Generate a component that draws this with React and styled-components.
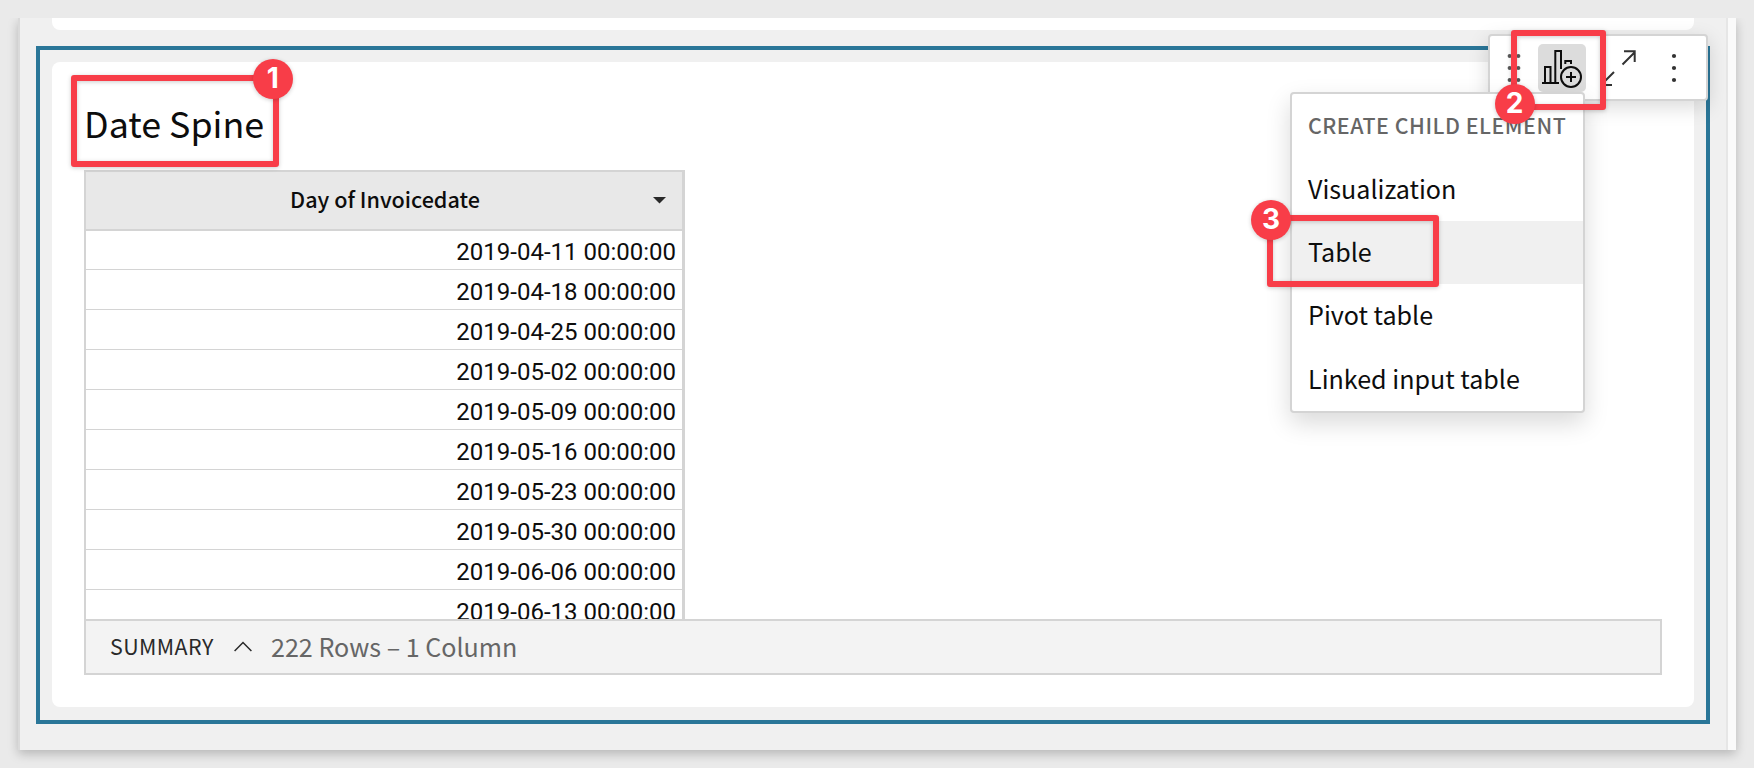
import React from "react";
import styled, { createGlobalStyle } from "styled-components";

const sans = `"Noto Sans CJK SC", "Noto Sans", sans-serif`;

const GlobalStyle = createGlobalStyle`
  * { box-sizing: border-box; }
  body { margin: 0; background: #eaeaea; overflow: hidden; font-family: ${sans}; color: #0d0d0d; }
`;

const Page = styled.div`
  position: relative;
  width: 1754px;
  height: 768px;
  padding: 18px 18px 18px;
  overflow: hidden;
`;

const Window = styled.div`
  display: flex;
  height: 732px;
  background: #f0f0f0;
  border-left: 2px solid #dadada;
  box-shadow: 0 4px 10px rgba(0, 0, 0, 0.22);
  clip-path: inset(0 -18px -18px -18px);
`;

const Canvas = styled.div`
  flex: 1;
  display: flex;
  flex-direction: column;
  padding: 0 16px;
`;

const ScrollTrack = styled.div`
  width: 10px;
  background: #fafafa;
  border-left: 2px solid #e6e6e6;
`;

const PreviousCard = styled.div`
  height: 12px;
  margin: 0 16px 16px;
  background: #fff;
  border-radius: 0 0 8px 8px;
`;

const SelectedFrame = styled.div`
  height: 678px;
  padding: 12px;
  border: 4px solid #2a7698;
`;

const Card = styled.section`
  height: 645px;
  padding: 0 32px;
  background: #fff;
  border-radius: 8px;
  display: flex;
  flex-direction: column;
`;

const Title = styled.h1`
  height: 108px;
  margin: 0;
  padding: 34px 0 0 0;
  font-size: 35.8px;
  line-height: 52px;
  font-weight: 400;
  white-space: nowrap;
`;

const TableViewport = styled.div`
  width: 601px;
  height: 449px;
  overflow: hidden;
  border: 2px solid #d4d4d4;
  border-right-width: 3px;
  border-bottom: 0;
`;

const HeaderCell = styled.div`
  display: flex;
  align-items: center;
  height: 59px;
  padding: 0 16px 0 31px;
  background: #e8e8e8;
  border-bottom: 2px solid #d4d4d4;
  font-size: 21.6px;
  font-weight: 500;
`;

const HeaderLabel = styled.span`
  flex: 1;
  padding-bottom: 5px;
  text-align: center;
`;

const Row = styled.div`
  height: ${(p) => (p.$first ? 39 : 40)}px;
  padding-right: 6px;
  border-bottom: 1px solid #d4d4d4;
  font: 400 24px/${(p) => (p.$first ? 43 : 44)}px Roboto, sans-serif;
  text-align: right;
`;

const Summary = styled.div`
  display: flex;
  align-items: center;
  height: 56px;
  padding-left: 24px;
  background: #f3f3f3;
  border: 2px solid #d4d4d4;
`;

const SummaryLabel = styled.span`
  width: 124px;
  padding-bottom: 3px;
  font-size: 21.4px;
  letter-spacing: 0.4px;
  color: #292929;
`;

const SummaryCount = styled.span`
  margin-left: 19px;
  padding-bottom: 2px;
  font-size: 25.1px;
  color: #666;
`;

const Toolbar = styled.div`
  position: absolute;
  left: 1488px;
  top: 34px;
  width: 220px;
  height: 67px;
  display: flex;
  background: #fff;
  border: 2px solid #d4d4d4;
  border-radius: 4px;
  box-shadow: 0 6px 20px rgba(0, 0, 0, 0.15);
`;

const ToolButton = styled.div`
  width: 48px;
  height: 48px;
  margin: 8px ${(p) => (p.$flush ? 0 : 6)}px 0 0;
  border-radius: 5px;
  background: ${(p) => (p.$active ? "#dcdcdc" : "transparent")};
  svg { display: block; }
`;

const Menu = styled.div`
  position: absolute;
  left: 1290px;
  top: 92px;
  width: 295px;
  height: 321px;
  background: #fff;
  border: 2px solid #d4d4d4;
  border-radius: 4px;
  box-shadow: 0 10px 24px rgba(0, 0, 0, 0.15);
`;

const MenuHeading = styled.div`
  height: 64px;
  padding-left: 16px;
  font-size: 21.4px;
  line-height: 62px;
  font-weight: 500;
  letter-spacing: 0.5px;
  color: #666;
  white-space: nowrap;
`;

const MenuItem = styled.div`
  height: 63px;
  padding-left: 16px;
  font-size: 25.1px;
  line-height: 60px;
  background: ${(p) => (p.$active ? "#f0f0f0" : "transparent")};
  &:last-child { line-height: 62px; }
`;

const Highlight = styled.div`
  position: absolute;
  left: ${(p) => p.$x}px;
  top: ${(p) => p.$y}px;
  width: ${(p) => p.$w}px;
  height: ${(p) => p.$h}px;
  border: 6px solid #f83d48;
  border-radius: 3px;
  filter: drop-shadow(0 1px 2px rgba(0, 0, 0, 0.2));
`;

const Badge = styled.div`
  position: absolute;
  left: ${(p) => p.$x}px;
  top: ${(p) => p.$y}px;
  width: 40px;
  height: 40px;
  border-radius: 50%;
  background: #f83d48;
  color: #fff;
  font: 700 28px/39px Inter, sans-serif;
  text-align: center;
  box-shadow: 0 1px 4px rgba(0, 0, 0, 0.2);
`;

const dates = [
  "2019-04-11", "2019-04-18", "2019-04-25", "2019-05-02", "2019-05-09",
  "2019-05-16", "2019-05-23", "2019-05-30", "2019-06-06", "2019-06-13",
];

const menuItems = ["Visualization", "Table", "Pivot table", "Linked input table"];

const Dots = ({ columns, fill }) => (
  <svg width="48" height="48">
    {columns.map((x) => [12, 24, 36].map((y) => <circle key={`${x}-${y}`} cx={x} cy={y} r="2.1" fill={fill} />))}
  </svg>
);

const AddChartIcon = () => (
  <svg width="48" height="48" fill="none" stroke="#0d0d0d" strokeWidth="2">
    <path d="M4 39H21M7 39V23H12.500V39M17.300 39V7H23V25M27.300 20V17H33V20" />
    <circle cx="33" cy="33" r="10" />
    <path d="M28 33H38M33 28V38" />
  </svg>
);

const ExpandIcon = () => (
  <svg width="48" height="48" fill="none" stroke="#333" strokeWidth="2">
    <path d="M30.500 20.500L43 8M32 7.300H42.700V18M22 28L10 40M9.500 30V41H20" />
  </svg>
);

export default function App() {
  return (
    <Page>
      <GlobalStyle />
      <Window>
        <Canvas>
          <PreviousCard />
          <SelectedFrame>
            <Card>
              <Title>Date Spine</Title>
              <TableViewport>
                <HeaderCell>
                  <HeaderLabel>Day of Invoicedate</HeaderLabel>
                  <svg width="13" height="7"><path d="M0 0H13L6.500 6.500Z" fill="#292929" /></svg>
                </HeaderCell>
                {dates.map((d, i) => <Row key={d} $first={i === 0}>{d} 00:00:00</Row>)}
              </TableViewport>
              <Summary>
                <SummaryLabel>SUMMARY</SummaryLabel>
                <svg width="18" height="13" fill="none" stroke="#292929" strokeWidth="1.5"><path d="M0.600 10L9 1.500L17.400 10" /></svg>
                <SummaryCount>222 Rows – 1 Column</SummaryCount>
              </Summary>
            </Card>
          </SelectedFrame>
        </Canvas>
        <ScrollTrack />
      </Window>

      <Toolbar>
        <ToolButton $flush><Dots columns={[19.7, 28.3]} fill="#595959" /></ToolButton>
        <ToolButton $active><AddChartIcon /></ToolButton>
        <ToolButton><ExpandIcon /></ToolButton>
        <ToolButton><Dots columns={[28]} fill="#333" /></ToolButton>
      </Toolbar>

      <Menu>
        <MenuHeading>CREATE CHILD ELEMENT</MenuHeading>
        {menuItems.map((m) => <MenuItem key={m} $active={m === "Table"}>{m}</MenuItem>)}
      </Menu>

      <Highlight $x={71} $y={75} $w={207.5} $h={92} />
      <Badge $x={252.7} $y={58.8}>1</Badge>
      <Highlight $x={1510.7} $y={29.7} $w={95.3} $h={80.6} />
      <Badge $x={1494.7} $y={84}>2</Badge>
      <Highlight $x={1267} $y={215.3} $w={171.5} $h={71.3} />
      <Badge $x={1251} $y={200.3}>3</Badge>
    </Page>
  );
}
